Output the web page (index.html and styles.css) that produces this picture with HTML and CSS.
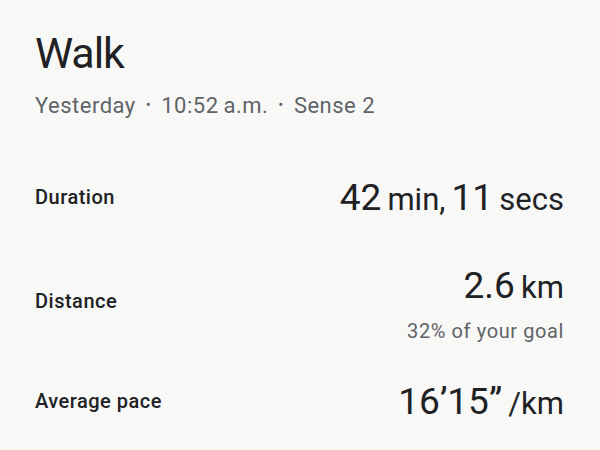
FILE: index.html
```html
<!DOCTYPE html>
<html>
<head>
<meta charset="utf-8">
<link rel="stylesheet" href="styles.css">
</head>
<body>
<div class="page">
  <h1 class="title">Walk</h1>
  <div class="meta">Yesterday <span class="dot">•</span> 10:52&#8201;a.m. <span class="dot">•</span> Sense 2</div>
  <div class="rows">
    <div class="row r1">
      <div class="label">Duration</div>
      <div class="val"><span class="num">42</span> <span class="unit">min,</span> <span class="num">11</span> <span class="unit">secs</span></div>
    </div>
    <div class="row r2">
      <div class="label">Distance</div>
      <div class="right">
        <div class="val"><span class="num">2.6</span> <span class="unit">km</span></div>
        <div class="sub">32% of your goal</div>
      </div>
    </div>
    <div class="row r3">
      <div class="label">Average pace</div>
      <div class="val"><span class="num">16’15”</span> <span class="unit">/km</span></div>
    </div>
  </div>
</div>
</body>
</html>
```
FILE: styles.css
```css
html, body { margin: 0; padding: 0; }
body {
  background: #f8f9f7;
  font-family: Roboto, "Open Sans", sans-serif;
  color: #202124;
  width: 600px;
  height: 450px;
  overflow: hidden;
}
.page { padding: 28px 36px 0 35px; }
.title {
  margin: 0;
  font-weight: 400;
  font-size: 43px;
  line-height: 50px;
  letter-spacing: -1.1px;
}
.meta {
  margin-top: 14px;
  font-size: 22px;
  line-height: 27px;
  color: #5f6368;
  letter-spacing: 0.5px;
}
.dot { font-size: 15px; vertical-align: 3px; margin: 0 4px; }
.rows { margin-top: 56px; }
.row {
  display: flex;
  justify-content: space-between;
  align-items: center;
}
.label { font-size: 20px; line-height: 24px; font-weight: 500; color: #202124; letter-spacing: 0.5px; margin-bottom: 4px; }
.right { display: flex; flex-direction: column; align-items: flex-end; }
.val { font-size: 37px; line-height: 46px; white-space: nowrap; word-spacing: -3px; }
.num { font-size: 37px; }
.unit { font-size: 31px; }
.sub { font-size: 20px; line-height: 24px; color: #5f6368; margin-top: 8px; letter-spacing: 0.6px; }
.r2 { margin-top: 40px; }
.r3 { margin-top: 36px; }
```
